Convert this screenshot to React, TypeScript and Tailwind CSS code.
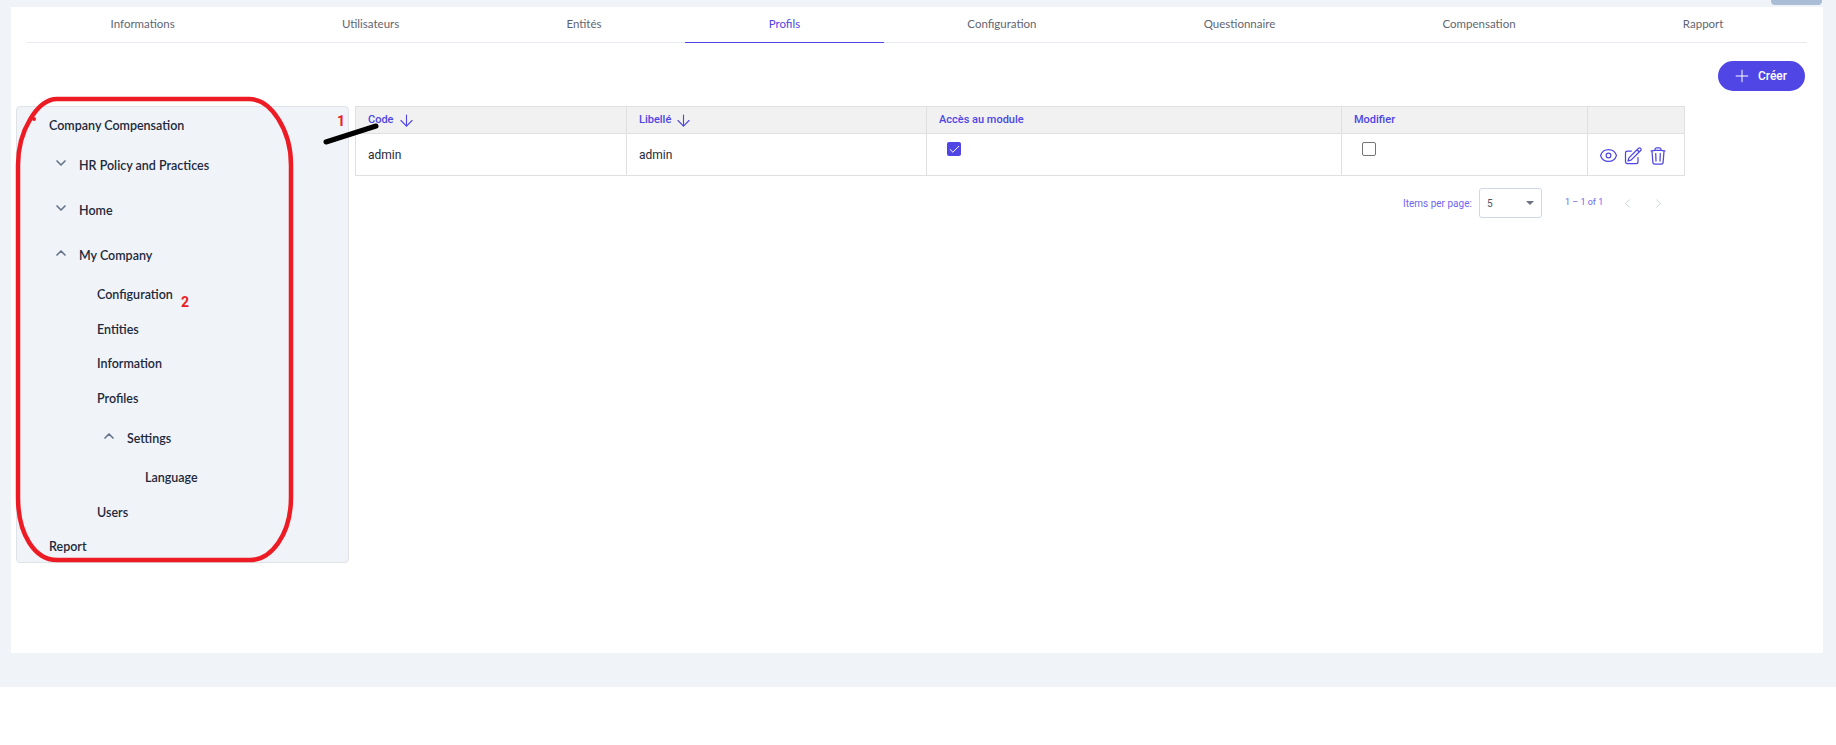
import React from "react";
import { HiOutlineEye, HiOutlinePencilSquare, HiOutlineTrash } from "react-icons/hi2";
import { ChevronDown, ChevronUp, ChevronLeft, ChevronRight, ArrowDown, Plus, Check } from "lucide-react";

const tabs = ["Informations", "Utilisateurs", "Entités", "Profils", "Configuration", "Questionnaire", "Compensation", "Rapport"];

function Leaf({ label, indent }: { label: string; indent: string }) {
  return <div className={`flex h-[34.5px] items-center ${indent}`}>{label}</div>;
}

function Parent({ label, open, indent }: { label: string; open: boolean; indent: string }) {
  const Icon = open ? ChevronUp : ChevronDown;
  return (
    <div className={`flex h-[45px] items-center ${indent}`}>
      <Icon size={16} strokeWidth={2.5} className="w-[16px] shrink-0 -translate-y-[3px] text-[#64748b]" />
      <span className="ml-[10px]">{label}</span>
    </div>
  );
}

function HeaderCell({ label, arrow, className }: { label: string; arrow?: boolean; className: string }) {
  return (
    <div className={`flex h-full items-center gap-[3px] border-r border-[#e0e0e0] px-[12px] ${className}`}>
      <span>{label}</span>
      {arrow && <ArrowDown size={19} strokeWidth={1.4} />}
    </div>
  );
}

export default function App() {
  return (
    <div className="h-[745px] bg-white font-['Roboto',sans-serif]">
      <div className="relative h-[687px] bg-[#f0f3f8] pl-[11px] pr-[13px] pt-[7px]">
        <div className="absolute right-[14px] top-0 h-[5px] w-[51px] rounded-b-[4px] bg-[#a9bdd6]" />
        <div className="relative h-[646px] bg-white">
          <div className="mx-[16px] flex h-[36px] border-b border-[#e8eaf2] font-['Lato',sans-serif] text-[11.5px] text-[#5f6672]">
            {tabs.map((t) => (
              <div
                key={t}
                className={`flex h-[36px] flex-auto items-center justify-center pb-[2px] ${
                  t === "Profils" ? "border-b border-[#4f46e5] text-[#4f46e5]" : ""
                }`}
              >
                {t}
              </div>
            ))}
          </div>

          <div className="flex justify-end pr-[18px] pt-[18px]">
            <button className="flex h-[30px] w-[87px] items-center justify-center gap-[6px] rounded-full bg-[#4f46e5] pr-[4px] text-[12px] font-medium text-white">
              <Plus size={20} strokeWidth={1.2} />
              <span>Créer</span>
            </button>
          </div>

          <div className="mt-[15px] flex items-start pl-[5px]">
            <div className="h-[457px] w-[333px] shrink-0 overflow-hidden rounded-[4px] border border-[#dfe3e8] bg-[#f0f3f8] pt-[2px] font-['Lato',sans-serif] text-[12.5px] font-semibold text-[#1e293b]">
              <Leaf label="Company Compensation" indent="pl-[32px]" />
              <Parent label="HR Policy and Practices" open={false} indent="pl-[36px]" />
              <Parent label="Home" open={false} indent="pl-[36px]" />
              <Parent label="My Company" open indent="pl-[36px]" />
              <Leaf label="Configuration" indent="pl-[80px]" />
              <Leaf label="Entities" indent="pl-[80px]" />
              <Leaf label="Information" indent="pl-[80px]" />
              <Leaf label="Profiles" indent="pl-[80px]" />
              <Parent label="Settings" open indent="pl-[84px]" />
              <Leaf label="Language" indent="pl-[128px]" />
              <Leaf label="Users" indent="pl-[80px]" />
              <Leaf label="Report" indent="pl-[32px]" />
            </div>

            <div className="ml-[6px] w-[1330px] shrink-0">
              <div className="border border-[#e0e0e0]">
                <div className="flex h-[27px] border-b border-[#e0e0e0] bg-[#f1f1f1] text-[11px] font-medium text-[#4f46e5]">
                  <HeaderCell label="Code" arrow className="w-[271px]" />
                  <HeaderCell label="Libellé" arrow className="w-[300px]" />
                  <HeaderCell label="Accès au module" className="w-[415px]" />
                  <HeaderCell label="Modifier" className="w-[246px]" />
                  <div className="flex-1" />
                </div>
                <div className="flex h-[41px] text-[12px] text-[#1f2937]">
                  <div className="flex w-[271px] items-center border-r border-[#e0e0e0] px-[12px]">admin</div>
                  <div className="flex w-[300px] items-center border-r border-[#e0e0e0] px-[12px]">admin</div>
                  <div className="w-[415px] border-r border-[#e0e0e0] pl-[20px] pt-[8px]">
                    <div className="flex h-[14px] w-[14px] items-center justify-center rounded-[2px] bg-[#4f46e5] text-white">
                      <Check size={13} strokeWidth={1.8} />
                    </div>
                  </div>
                  <div className="w-[246px] border-r border-[#e0e0e0] pl-[20px] pt-[8px]">
                    <div className="h-[14px] w-[14px] rounded-[2px] border border-[#757575]" />
                  </div>
                  <div className="flex flex-1 items-center gap-[5px] pl-[11px] pt-[2px] text-[#4f46e5]">
                    <HiOutlineEye size={19} className="shrink-0" />
                    <HiOutlinePencilSquare size={20} className="shrink-0" />
                    <HiOutlineTrash size={20} className="shrink-0" />
                  </div>
                </div>
              </div>

              <div className="mt-[12px] flex h-[30px] items-center text-[10px] text-[#6f66ef]">
                <div className="ml-[1048px] w-[76px]">Items per page:</div>
                <div className="flex h-[30px] w-[63px] items-center justify-between rounded-[3px] border border-[#cfd8e3] pl-[7px] pr-[7px] text-[#4b5563]">
                  <span>5</span>
                  <span className="h-0 w-0 border-x-[4px] border-t-[4px] border-x-transparent border-t-[#6b7280]" />
                </div>
                <div className="ml-[23px] w-[52px] text-[9px]">1 – 1 of 1</div>
                <ChevronLeft size={15} strokeWidth={1.5} className="ml-[3px] text-[#cbd0d6]" />
                <ChevronRight size={15} strokeWidth={1.5} className="ml-[16px] text-[#cbd0d6]" />
              </div>
            </div>
          </div>
        </div>

        <svg className="pointer-events-none absolute left-0 top-0" width="400" height="600" fill="none">
          <path
            d="M18 165 C18 130 38 99 57 99 L249 99 C271 99 291 130 291 165 L291 497 C291 535 271 560 250 560 L57 560 C35 560 18 535 18 497 Z"
            stroke="#ed1c24"
            strokeWidth="4.5"
          />
          <circle cx="34" cy="119" r="2" fill="#ed1c24" />
          <path d="M326 142 L376 126" stroke="#000" strokeWidth="5" strokeLinecap="round" />
        </svg>
        <span className="absolute left-[337px] top-[111px] text-[14px] font-bold text-[#ed1c24]">1</span>
        <span className="absolute left-[181px] top-[292px] text-[14px] font-bold text-[#ed1c24]">2</span>
      </div>
    </div>
  );
}
